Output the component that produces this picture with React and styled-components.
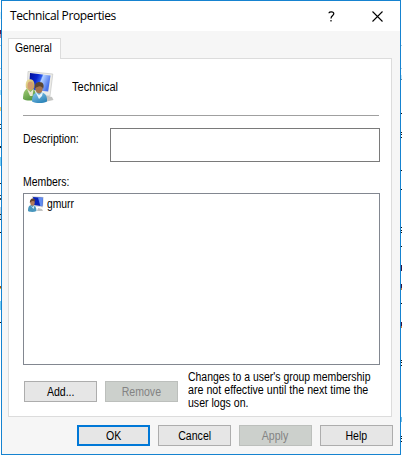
import React from "react";
import styled, { createGlobalStyle } from "styled-components";

const GlobalStyle = createGlobalStyle`
  * { box-sizing: border-box; }
  body { margin: 0; background: #fff; overflow: hidden; }
`;

const Desktop = styled.div`
  display: grid;
  grid-template-columns: 1px 400px 1px;
  height: 455px;
  font: 12px/13px "Liberation Sans", Arial, sans-serif;
  color: #000;
`;

const EdgeStrip = styled.div`
  display: grid;
  align-content: start;
  grid-template-rows: repeat(455, 1px);
`;

const EdgeMark = styled.i`
  grid-column: 1;
  grid-row: ${(p) => p.$at + 1} / span ${(p) => p.$size};
  background: ${(p) => p.$color};
`;

const Dialog = styled.main`
  display: flex;
  flex-direction: column;
  border: 1px solid #1683d0;
  background: #f6f6f6;
  min-width: 0;
`;

const TitleBar = styled.header`
  display: flex;
  align-items: center;
  height: 30px;
  padding: 0 17px 0 8px;
  background: #fff;
`;

const Title = styled.h1`
  flex: 1;
  margin: 0;
  font: 12px/16px "Open Sans", "Noto Sans", sans-serif;
  letter-spacing: ${(p) => p.$spacing}px;
`;

const CaptionButton = styled.button`
  display: flex;
  padding: 0;
  border: 0;
  background: none;
  margin-left: ${(p) => p.$gap}px;
`;

const Tabs = styled.nav`
  display: flex;
  padding: 7px 0 0 6px;
  height: 27px;
`;

const Tab = styled.div`
  width: 53px;
  height: 21px;
  margin-bottom: -1px;
  border: 1px solid #dcdcdc;
  border-bottom: 0;
  background: #fff;
  padding: 3px 0 0 6px;
  z-index: 1;
`;

const Panel = styled.section`
  display: flex;
  flex-direction: column;
  width: 384px;
  height: 359px;
  margin-left: 6px;
  padding: 0 11px 0 14px;
  border: 1px solid #dcdcdc;
  background: #fff;
`;

const Text = styled.span`
  display: block;
  white-space: nowrap;
  transform-origin: 0 50%;
  transform: scaleX(${(p) => p.$stretch || 0.88});
`;

const GroupHeader = styled.div`
  display: flex;
  height: 57px;
  width: 356px;
  padding-top: 11px;
  border-bottom: 1px solid #a0a0a0;
`;

const GroupName = styled.div`
  padding: 11px 0 0 17px;
`;

const DescriptionRow = styled.div`
  display: flex;
  margin-top: 12px;
`;

const DescriptionLabel = styled.label`
  width: 87px;
  padding-top: 5px;
`;

const DescriptionField = styled.div`
  width: 270px;
  height: 34px;
  border: 1px solid #7a7a7a;
`;

const MembersLabel = styled.div`
  margin-top: 14px;
  height: 17px;
`;

const MemberList = styled.ul`
  list-style: none;
  margin: 0;
  width: 357px;
  height: 172px;
  padding: 2px 4px;
  border: 1px solid #828790;
`;

const Member = styled.li`
  display: flex;
  gap: 3px;
  height: 17px;
  line-height: 16px;
`;

const MemberActions = styled.div`
  display: flex;
  gap: 8px;
  padding: 16px 0 0 1px;
`;

const Button = styled.button`
  display: flex;
  flex: none;
  justify-content: center;
  align-items: center;
  width: 73px;
  height: 21px;
  padding: 2px 0 0;
  font: inherit;
  color: ${(p) => (p.disabled ? "#838383" : "#000")};
  background: ${(p) => (p.disabled ? "#ccd0cc" : "#e6e6e6")};
  border: ${(p) => (p.$primary ? "2px solid #0078d7" : `1px solid ${p.disabled ? "#bcbfbc" : "#adadad"}`)};

  ${Text} { transform-origin: 50% 50%; }
`;

const Notice = styled.p`
  margin: -10px 0 0 2px;
`;

const Footer = styled.footer`
  display: flex;
  gap: 8px;
  padding: 8px 0 0 75px;
`;

function UsersIcon() {
  return (
    <svg width="32" height="34" viewBox="0 0 32 34" aria-hidden="true">
      <defs>
        <linearGradient id="screen" x2="1" y2=".35">
          <stop stopColor="#000c90" /><stop offset=".4" stopColor="#0925cf" />
          <stop offset=".58" stopColor="#2c5cec" /><stop offset=".64" stopColor="#b4d1ff" /><stop offset="1" stopColor="#4a74ec" />
        </linearGradient>
        <linearGradient id="blue" y2="1" x2=".6"><stop stopColor="#8bc9ee" /><stop offset="1" stopColor="#2f86ba" /></linearGradient>
        <linearGradient id="green" y2="1" x2=".6"><stop stopColor="#a7cf78" /><stop offset="1" stopColor="#55963f" /></linearGradient>
        <linearGradient id="hair" y2="1"><stop stopColor="#f0e6a2" /><stop offset="1" stopColor="#b99845" /></linearGradient>
      </defs>
      <path d="M22 25l7 2 1.5 3-9 2z" fill="#c3c4c2" />
      <path d="M5 1.500L29.800 4 27 26 4 24z" fill="#edece7" stroke="#c6c7c7" strokeWidth=".7" />
      <path d="M7 3l20.500 2.500L25.200 21.500 6 19.500z" fill="url(#screen)" />
      <path d="M0 29c0-7 2-11 7-11s6 4 6 11c-3 2-10 2-13 0z" fill="url(#green)" />
      <path d="M3 18C2 12 4 9 7.200 9.300c4 0 5 5 4 9L7 21z" fill="url(#hair)" />
      <ellipse cx="7.400" cy="15.500" rx="2.800" ry="4" fill="#d09c70" />
      <path d="M4 19l3.500 3 3-3-1 7H7z" fill="#e9e8cf" />
      <path d="M9 31.500C9 25 11.500 22 16.500 22s8 3.500 7.500 9.500c-4 2-11 2-15 0z" fill="url(#blue)" />
      <path d="M12.500 22l3.500 3 4-3-1 4-3 3z" fill="#e5f3fa" />
      <ellipse cx="16" cy="18.500" rx="3.700" ry="5" fill="#a5744f" />
      <path d="M12 18.500c-.6-4.500 1.500-6.500 4.500-6.500 4 0 5 3.500 3.500 7-1-4-5-3.500-8-.5z" fill="#5b4633" />
    </svg>
  );
}

function MemberIcon() {
  return (
    <svg width="16" height="17" viewBox="0 0 16 17" aria-hidden="true">
      <path d="M4 0l11.800 1-.8 10.500L4 10z" fill="#d7dad9" />
      <path d="M5 1l10 .8-.7 8.500L6 9z" fill="#0923b8" />
      <path d="M10 1.400l5 .4-.7 8.500-2-.3z" fill="#638df0" />
      <path d="M10 12l4 1 1 2H9z" fill="#c3c4c4" />
      <path d="M0 15c0-4 1-6 4-6s4.500 2 4.500 6c-2.500 1.200-6.500 1.200-8.500 0z" fill="#4896bd" />
      <path d="M2.500 9.500l2 1.500 2-1.500-1 3.500z" fill="#dff0f5" />
      <ellipse cx="4.500" cy="6.500" rx="2.200" ry="3.200" fill="#b37b58" />
      <path d="M1.800 7c0-3 1-4.500 3-4.500S7.500 4 7 5.500C5.500 4.500 3.500 4.500 1.800 7z" fill="#65452f" />
    </svg>
  );
}

const leftMarks = [
  [12, 7, "#d7f2fd"], [30, 4, "#5b184d"], [34, 4, "#bd8599"], [45, 1, "#b8ccd8"],
  [68, 1, "#b8ccd8"], [79, 1, "#5b7080"], [90, 5, "#a7e2fb"], [107, 4, "#ffd36d"],
  [124, 1, "#333"], [128, 1, "#333"], [146, 2, "#222"], [157, 9, "#76cef5"],
  [183, 1, "#222"], [195, 1, "#444"], [198, 2, "#444"], [207, 13, "#c4d5e2"],
  [214, 1, "#222"], [219, 1, "#222"], [232, 1, "#111"], [286, 2, "#a45b13"],
  [288, 1, "#f2b344"], [301, 9, "#73cdf5"], [322, 1, "#111"],
];
const rightMarks = [
  [45, 1, "#b4ccdc"], [68, 1, "#b4ccdc"], [75, 4, "#c8e5f4"], [79, 1, "#69869b"],
  [113, 1, "#111"], [132, 1, "#111"], [134, 1, "#111"], [137, 1, "#111"],
  [170, 1, "#111"], [189, 1, "#111"], [227, 1, "#111"], [230, 1, "#111"],
  [232, 1, "#111"], [246, 1, "#111"], [265, 6, "#39133d"], [284, 4, "#39133d"],
  [288, 2, "#c57538"], [303, 1, "#111"], [322, 4, "#39133d"], [326, 2, "#c57538"],
  [360, 1, "#111"], [362, 1, "#111"], [365, 1, "#111"], [417, 5, "#75bfe6"],
  [436, 1, "#111"], [438, 1, "#111"], [441, 1, "#111"],
];

function Edge({ marks }) {
  return (
    <EdgeStrip>
      {marks.map(([at, size, color]) => <EdgeMark key={at} $at={at} $size={size} $color={color} />)}
    </EdgeStrip>
  );
}

export default function App() {
  return (
    <>
      <GlobalStyle />
      <Desktop>
        <Edge marks={leftMarks} />
        <Dialog>
          <TitleBar>
            <Title $spacing={-0.38}>Technical Properties</Title>
            <CaptionButton aria-label="Help">
              <svg width="7" height="11" viewBox="0 0 7 11" fill="none" stroke="#000" strokeWidth="1.2">
                <path d="M1 2.200C1 .3 5.800.2 5.800 2.700 5.800 4.500 3 4.500 3 7.400M3 9v1.500" />
              </svg>
            </CaptionButton>
            <CaptionButton aria-label="Close" $gap={37}>
              <svg width="11" height="11" viewBox="0 0 11 11" stroke="#000" strokeWidth="1.1">
                <path d="M.5.5l10 10m0-10l-10 10" />
              </svg>
            </CaptionButton>
          </TitleBar>
          <Tabs><Tab><Text $stretch={0.86}>General</Text></Tab></Tabs>
          <Panel>
            <GroupHeader>
              <UsersIcon />
              <GroupName><Text $stretch={0.92}>Technical</Text></GroupName>
            </GroupHeader>
            <DescriptionRow>
              <DescriptionLabel><Text>Description:</Text></DescriptionLabel>
              <DescriptionField />
            </DescriptionRow>
            <MembersLabel><Text $stretch={0.87}>Members:</Text></MembersLabel>
            <MemberList>
              <Member><MemberIcon /><Text $stretch={0.86}>gmurr</Text></Member>
            </MemberList>
            <MemberActions>
              <Button><Text>Add...</Text></Button>
              <Button disabled><Text>Remove</Text></Button>
              <Notice>
                <Text $stretch={0.87}>Changes to a user's group membership</Text>
                <Text $stretch={0.89}>are not effective until the next time the</Text>
                <Text>user logs on.</Text>
              </Notice>
            </MemberActions>
          </Panel>
          <Footer>
            <Button $primary><Text>OK</Text></Button>
            <Button><Text>Cancel</Text></Button>
            <Button disabled><Text>Apply</Text></Button>
            <Button><Text>Help</Text></Button>
          </Footer>
        </Dialog>
        <Edge marks={rightMarks} />
      </Desktop>
    </>
  );
}
